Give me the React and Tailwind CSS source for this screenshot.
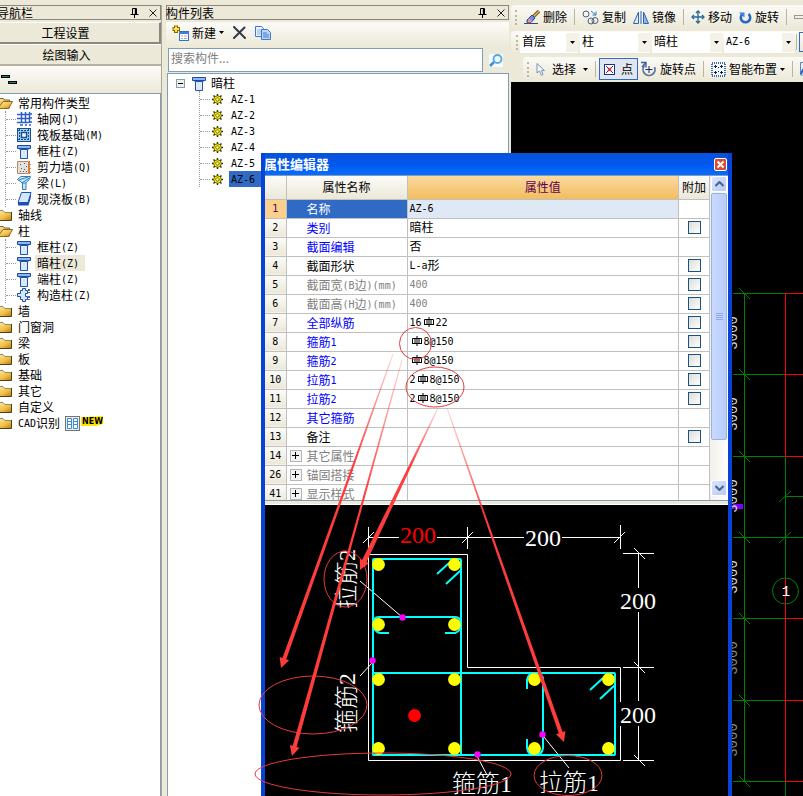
import React, { useState } from "react";

// Splits a label so that latin characters take half the width of a hanzi
const Txt = ({ children }) => (
  <>
    {children.split(/([\x20-\x7e]+)/).map((part, i) =>
      i % 2 ? (
        <span
          key={i}
          className="align-[1px] font-['DejaVu_Sans_Mono',monospace] text-[10px] leading-none whitespace-pre"
        >
          {part}
        </span>
      ) : (
        part
      )
    )}
  </>
);

/* ---------- icons ---------- */

const PinIcon = () => (
  <svg width="9" height="10" viewBox="0 0 9 10" fill="none" stroke="#000">
    <path d="M2.5 6V0.5H6.5V6M0.5 6.5H8.5M4.5 7V10" />
    <path d="M5.5 1V6" strokeWidth="1.4" />
  </svg>
);

const CloseIcon = () => (
  <svg width="8" height="8" viewBox="0 0 8 8" stroke="#222">
    <path d="M0.5 0.5L7.5 7.5M7.5 0.5L0.5 7.5" />
  </svg>
);

const Caret = () => (
  <svg width="5" height="3" viewBox="0 0 5 3" className="shrink-0">
    <path d="M0 0H5L2.5 3Z" fill="#000" />
  </svg>
);

const FolderIcon = ({ open }) => (
  <svg width="18" height="12" viewBox="0 0 18 12" className="-ml-[5px] shrink-0">
    <defs>
      <linearGradient id="folder" x1="0" y1="0" x2="1" y2="1">
        <stop offset="0" stopColor="#fff3b0" />
        <stop offset="0.6" stopColor="#f0bd45" />
        <stop offset="1" stopColor="#b97908" />
      </linearGradient>
    </defs>
    {open ? (
      <>
        <path d="M1 11V1.5H8L10 3H14.5V11Z" fill="url(#folder)" stroke="#7a6540" />
        <path d="M3 11.5L8 4.5H17.5L13.5 11.5Z" fill="url(#folder)" stroke="#8a6a20" />
      </>
    ) : (
      <>
        <path d="M1 11V1.5H8L10 3H16.5V11.5H1Z" fill="url(#folder)" />
        <path d="M1 1.5H8L10 3.5H16" fill="none" stroke="#9a8a60" />
        <path d="M16.5 3V11.5H1" fill="none" stroke="#4f4020" />
      </>
    )}
  </svg>
);

const ColumnIcon = () => (
  <svg width="14" height="15" viewBox="0 0 14 15" className="shrink-0">
    <path d="M0.5 1.5H13.5V4.5H0.5Z" fill="#8fb7ef" stroke="#1c4ba3" />
    <path d="M2 5H12L10 7H4Z" fill="#2a5fc0" />
    <path d="M3.5 5.5H10.5V14.5H3.5Z" fill="#dbe9fc" stroke="#2353ab" />
  </svg>
);

const GridIcon = () => (
  <svg width="15" height="14" viewBox="0 0 15 14" className="shrink-0" fill="none" stroke="#2d5fc4" strokeWidth="1.5">
    <path d="M4.5 0V11M8.5 0V11M12.5 0V11M0 2.5H12M0 6.5H12M0 10.5H12" />
    <path d="M3 13H6M8 13H10M12 13H14M13 2H15M13 6H15M13 10H15" />
  </svg>
);

const RaftIcon = () => (
  <svg width="14" height="14" viewBox="0 0 14 14" className="shrink-0" fill="none" stroke="#16508f">
    <rect x="0.5" y="0.5" width="13" height="13" fill="#a9cdf3" />
    <rect x="4.5" y="4.5" width="5" height="5" fill="#fff" strokeWidth="1.5" />
    <path d="M2.5 1V13M11.5 1V13M1 2.5H13M1 11.5H13" strokeDasharray="2 1" />
  </svg>
);

const WallIcon = () => (
  <svg width="15" height="14" viewBox="0 0 15 14" className="shrink-0">
    <path d="M0.5 1.5H11.5V13.5H0.5Z" fill="#e5e1df" stroke="#b98466" />
    <path d="M3 4.5h1M7 3.5h1M9 6.5h1M4 8.5h1M7 9.5h1M3 11.5h1M6 11.5h1M9 11.5h1" stroke="#555" />
    <path d="M12.5 1V14M11 4.5H14M11 8.5H14M11 12.5H14" stroke="#e9792c" />
  </svg>
);

const BeamIcon = () => (
  <svg width="14" height="14" viewBox="0 0 14 14" className="shrink-0" stroke="#2f7fbf">
    <path d="M0.5 3.5L4 0.5H13.5L12 4L9 6.5V13.5H5.5V7Z" fill="#c9e6fa" />
    <path d="M2 4L11 1M5 7L12 2M6 7H9" fill="none" />
  </svg>
);

const SlabIcon = () => (
  <svg width="15" height="14" viewBox="0 0 15 14" className="shrink-0">
    <path d="M4.5 0.5H14L11 10.5H1Z" fill="#d4e7fd" stroke="#1c50b5" />
    <path d="M1 10.5H11L14 1V5L11.5 13.5H1Z" fill="#1c50b5" />
  </svg>
);

const TieColumnIcon = () => (
  <svg width="14" height="14" viewBox="0 0 14 14" className="shrink-0">
    <path
      d="M3.5 2.5H5.5V0.5H8.5V2.5H10.5V5.5H8.5V8.5H10.5V11.5H8.5V13.5H5.5V11.5H3.5V8.5H0.5V5.5H3.5Z"
      fill="#d3e6fb"
      stroke="#1f4f9f"
    />
    <path d="M12 1V5M12 8V12" stroke="#3d6cb5" strokeWidth="2" strokeDasharray="2 1" />
  </svg>
);

const GearIcon = () => (
  <svg width="11" height="11" viewBox="0 0 11 11" className="shrink-0">
    <path d="M5.5 0V11M0 5.5H11M1.5 1.5L9.5 9.5M9.5 1.5L1.5 9.5" stroke="#2b2600" strokeWidth="1.4" />
    <circle cx="5.5" cy="5.5" r="3.8" fill="#f2e600" stroke="#4d4600" strokeWidth="0.7" />
    <circle cx="5.5" cy="5.5" r="1.7" fill="#fffb9c" stroke="#222" strokeDasharray="1.3 1" />
  </svg>
);

const NewItemIcon = () => (
  <svg width="17" height="16" viewBox="0 0 17 16">
    <path d="M4 0.5V8M0.5 4H8" stroke="#8a6a00" strokeWidth="4" />
    <path d="M4 1.5V7M1.5 4H7" stroke="#ffe14a" strokeWidth="2" />
    <rect x="7.5" y="6.5" width="9" height="9" fill="#fff" stroke="#3a6fb5" />
    <path d="M7 8H17" stroke="#3f7fd8" strokeWidth="2" />
    <path d="M9 11H11M12 11H15M9 13.5H11M12 13.5H15" stroke="#8fb0dc" />
  </svg>
);

const DeleteIcon = () => (
  <svg width="13" height="13" viewBox="0 0 13 13" stroke="#333a48" strokeWidth="2" strokeLinecap="round">
    <path d="M1 1L12 12M11.5 1.5L1 12" />
  </svg>
);

const CopyDocIcon = () => (
  <svg width="16" height="14" viewBox="0 0 16 14" fill="#e9f3ff" stroke="#3f77cc">
    <path d="M0.5 0.5H6.5L8.5 2.5V10.5H0.5Z" />
    <path d="M2 4H6M2 6H6M2 8H6" stroke="#8db3e8" />
    <path d="M6.5 3.5H12.5L15.5 6.5V13.5H6.5Z" fill="#bcd7f8" />
    <path d="M8 7H12M8 9H14M8 11H14" />
  </svg>
);

const SearchIcon = () => (
  <svg width="14" height="13" viewBox="0 0 14 13" fill="none">
    <rect width="14" height="13" fill="#f4fbff" />
    <path d="M5 8L1 12" stroke="#3f8fd0" strokeWidth="2.5" />
    <circle cx="8.5" cy="5" r="4" fill="#eef9ff" stroke="#55a8e2" strokeWidth="1.8" />
  </svg>
);

const EraseIcon = () => (
  <svg width="16" height="15" viewBox="0 0 16 15">
    <path d="M15 1L8 8" stroke="#7a5a28" strokeWidth="3.5" />
    <path d="M15 1L9 7" stroke="#e3b25a" strokeWidth="1.5" />
    <path d="M8 5L11 8L7 12.5H3L3 10Z" fill="#6d8fe0" stroke="#2d4483" />
    <path d="M5 8L8 11L6.5 12.5H3.5Z" fill="#f48fa8" />
    <path d="M0 13.5H14" stroke="#2c4a86" />
  </svg>
);

const CopyIcon = () => (
  <svg width="17" height="15" viewBox="0 0 17 15" fill="none" stroke="#4a5f80">
    <circle cx="4" cy="4" r="3" />
    <circle cx="9" cy="11" r="3" />
    <circle cx="13" cy="10.5" r="3" />
    <path d="M9 1L14 5M14 1.5V5H10.5" stroke="#2d7ac0" />
  </svg>
);

const MirrorIcon = () => (
  <svg width="16" height="13" viewBox="0 0 16 13" fill="none" stroke="#2f65b4">
    <path d="M5.5 1V12.5H0.5Z" fill="#dceafb" />
    <path d="M10.5 1V12.5H15.5Z" fill="#8fb6ea" />
    <path d="M8 0V13" />
  </svg>
);

const MoveIcon = () => (
  <svg width="14" height="14" viewBox="0 0 14 14" fill="none" stroke="#25679c" strokeWidth="1.3">
    <path d="M7 1V13M1 7H13" />
    <path d="M5 3L7 1L9 3M5 11L7 13L9 11M3 5L1 7L3 9M11 5L13 7L11 9" />
  </svg>
);

const RotateIcon = () => (
  <svg width="13" height="13" viewBox="0 0 13 13" fill="none">
    <path d="M3.5 3A4.7 4.7 0 1 0 9.5 3" stroke="#2a68c8" strokeWidth="2.6" />
    <path d="M0 1.5H5.5V6.5Z" fill="#3f83e0" />
  </svg>
);

const CursorIcon = () => (
  <svg width="9" height="13" viewBox="0 0 9 13">
    <path d="M1 0.5V10L3.5 8L5.5 12.5L7 11.5L5.5 7.5H8.5Z" fill="#f3f7fd" stroke="#7c94b8" />
  </svg>
);

const PointIcon = () => (
  <svg width="11" height="11" viewBox="0 0 11 11">
    <rect x="0.5" y="0.5" width="10" height="10" fill="#fff" stroke="#1d2f8f" />
    <path d="M2 2L9 9M9 2L2 9" stroke="#2338a0" />
    <path d="M4 4L7 7M7 4L4 7" stroke="#e0202c" strokeWidth="1.6" />
  </svg>
);

const RotatePointIcon = () => (
  <svg width="16" height="16" viewBox="0 0 16 16" fill="none">
    <path d="M3.5 4.5A6 6 0 1 0 13.5 6" stroke="#5a76a8" strokeWidth="1.8" />
    <path d="M8 5V12M4.5 8.5H11.5" stroke="#14295c" />
    <path d="M0 1.5H5V6.5M4.5 2L1 6" stroke="#3863ad" strokeWidth="1.4" />
  </svg>
);

const SmartIcon = () => (
  <svg width="15" height="15" viewBox="0 0 15 15" fill="none" stroke="#0f2244">
    <rect x="1" y="1" width="13" height="13" fill="#f3f8ff" stroke="#3e6ea8" strokeWidth="2" strokeDasharray="1 1" />
    <path d="M4.5 3V6M3 4.5H6M10.5 3V6M9 4.5H12M4.5 9V12M3 10.5H6M10.5 9V12M9 10.5H12M7.5 5V6M7.5 9V10" />
  </svg>
);

const LayersIcon = () => (
  <svg width="16" height="10" viewBox="0 0 16 10">
    <path d="M0 1.5H9M7 7.5H16" stroke="#000" strokeWidth="3" />
    <path d="M1 1.5H8M8 7.5H15" stroke="#1b8076" />
  </svg>
);

const NewBadge = () => (
  <svg width="22" height="10" viewBox="0 0 22 10" fill="none">
    <path d="M0 1L22 0V8L15 10H0Z" fill="#ffe600" />
    <text x="1" y="8" className="fill-black font-['DejaVu_Sans',sans-serif] text-[8px] font-bold">
      NEW
    </text>
  </svg>
);

const Rebar = () => (
  <svg width="12" height="12" viewBox="0 0 12 12" fill="none" stroke="#000" className="shrink-0">
    <path d="M1 8.5H11M1.5 3.5H10.5V8M1.5 3.5V8M6 1V11M4 3.5V8M8 3.5V8" />
  </svg>
);

/* ---------- shared bits ---------- */

const PanelHeader = ({ title }) => (
  <div className="flex h-[15px] items-center gap-[10px] border border-[#8a887c] pr-[3px]">
    <h2 className="-ml-px flex-1 whitespace-nowrap">{title}</h2>
    <button aria-label="固定"><PinIcon /></button>
    <button aria-label="关闭"><CloseIcon /></button>
  </div>
);

const Grip = () => (
  <span className="h-[15px] w-[2px] shrink-0 border-l-2 border-dotted border-[#b9b6a4]" />
);

const Sep = () => <span className="h-4 w-px shrink-0 bg-[#b8b5a5]" />;

/* ---------- left navigation ---------- */

const navTree = [
  {
    name: "常用构件类型",
    children: [
      { name: "轴网(J)", icon: GridIcon },
      { name: "筏板基础(M)", icon: RaftIcon },
      { name: "框柱(Z)", icon: ColumnIcon },
      { name: "剪力墙(Q)", icon: WallIcon },
      { name: "梁(L)", icon: BeamIcon },
      { name: "现浇板(B)", icon: SlabIcon },
    ],
  },
  { name: "轴线" },
  {
    name: "柱",
    children: [
      { name: "框柱(Z)", icon: ColumnIcon },
      { name: "暗柱(Z)", icon: ColumnIcon, active: true },
      { name: "端柱(Z)", icon: ColumnIcon },
      { name: "构造柱(Z)", icon: TieColumnIcon },
    ],
  },
  { name: "墙" },
  { name: "门窗洞" },
  { name: "梁" },
  { name: "板" },
  { name: "基础" },
  { name: "其它" },
  { name: "自定义" },
  { name: "CAD识别", isNew: true },
];

const NavPanel = () => (
  <aside className="flex w-[162px] shrink-0 flex-col border-r border-[#a9a796]">
    <div className="overflow-hidden">
      <div className="-ml-[3px]">
        <PanelHeader title="导航栏" />
      </div>
    </div>
    <button className="mt-[2px] h-[22px] border-t border-r-2 border-b-2 border-[#8b897d] border-t-white pr-7">
      工程设置
    </button>
    <button className="h-[22px] border-t border-b-2 border-[#b4b1a1] border-t-white pr-7">
      绘图输入
    </button>
    <div className="flex h-[27px] items-center bg-linear-to-b from-[#fcfbf8] to-[#ece9d8] pl-px">
      <LayersIcon />
    </div>
    <ul className="flex-1 overflow-hidden border-t border-r border-[#7f9db9] bg-white pt-px">
      {navTree.map((node) => (
        <li key={node.name}>
          <div className="flex h-4 items-center gap-[5px]">
            <FolderIcon open={!!node.children} />
            <span className="whitespace-nowrap"><Txt>{node.name}</Txt></span>
            {node.isNew && (
              <span className="flex gap-px">
                <svg width="15" height="15" viewBox="0 0 15 15">
                  <rect x="0.5" y="0.5" width="14" height="14" fill="#e8edf3" stroke="#78746c" />
                  <path d="M2.5 2.5H6.5V12.5H2.5ZM8.5 2.5H12.5V12.5H8.5Z" fill="#fff" stroke="#3c8ad8" />
                  <path d="M3 5.5H6M3 8.5H6M9 5.5H12M9 8.5H12" stroke="#3c8ad8" />
                </svg>
                <NewBadge />
              </span>
            )}
          </div>
          {node.children && (
            <ul className="ml-[5px] border-l border-dotted border-[#999]">
              {node.children.map((item) => (
                <li key={item.name} className="flex h-4 items-center">
                  <span className="w-[10px] border-t border-dotted border-[#999]" />
                  <span className="flex w-4 justify-center"><item.icon /></span>
                  <span
                    className={`ml-[3px] h-4 px-[2px] whitespace-nowrap ${
                      item.active ? "bg-[#ece9d8] pr-[6px]" : ""
                    }`}
                  >
                    <Txt>{item.name}</Txt>
                  </span>
                </li>
              ))}
            </ul>
          )}
        </li>
      ))}
    </ul>
  </aside>
);

/* ---------- component list ---------- */

const members = ["AZ-1", "AZ-2", "AZ-3", "AZ-4", "AZ-5", "AZ-6"];

const MemberPanel = () => {
  const [keyword, setKeyword] = useState("");

  return (
    <section className="ml-1 flex w-[343px] shrink-0 flex-col">
      <PanelHeader title="构件列表" />
      <div className="mt-[2px] flex h-[25px] items-center bg-linear-to-b from-[#fcfbf8] to-[#ece9d8] pb-1 pl-[6px]">
        <button className="flex items-center gap-[3px]">
          <NewItemIcon />
          新建
          <Caret />
        </button>
        <button aria-label="删除" className="ml-[9px]"><DeleteIcon /></button>
        <button aria-label="复制" className="ml-[9px]"><CopyDocIcon /></button>
      </div>
      <div className="mt-px ml-[2px] flex h-[24px]">
        <input
          className="min-w-0 flex-1 border border-[#7f9db9] bg-white px-[2px] pb-1 placeholder:text-[#808080]"
          aria-label="搜索构件"
          placeholder="搜索构件..."
          value={keyword}
          onChange={(e) => setKeyword(e.target.value)}
        />
        <button aria-label="搜索" className="flex w-[26px] items-center justify-center">
          <SearchIcon />
        </button>
      </div>
      <div className="mt-px ml-px flex-1 overflow-hidden border border-b-0 border-[#7f9db9] bg-white pt-px pl-2">
        <div className="flex h-4 items-center">
          <svg width="9" height="9" viewBox="0 0 9 9">
            <rect x="0.5" y="0.5" width="8" height="8" fill="#f1efe6" stroke="#7f9db9" />
            <path d="M2 4.5H7" stroke="#000" />
          </svg>
          <span className="mr-[5px] ml-[7px]"><ColumnIcon /></span>
          暗柱
        </div>
        <ul className="ml-[23px] border-l border-dotted border-[#999]">
          {members.map((name) => (
            <li key={name} className="flex h-4 items-center">
              <span className="mr-[2px] w-[10px] border-t border-dotted border-[#999]" />
              <GearIcon />
              <span
                className={`ml-[6px] h-4 px-[2px] ${
                  name === "AZ-6" ? "w-10 bg-[#316ac5]" : ""
                }`}
              >
                <Txt>{name}</Txt>
              </span>
            </li>
          ))}
        </ul>
      </div>
    </section>
  );
};

/* ---------- toolbars ---------- */

const Tool = ({ icon, children }) => (
  <button className="flex shrink-0 items-center gap-[3px] whitespace-nowrap">
    {icon}
    {children}
  </button>
);

const Combo = ({ label, value, width }) => (
  <span className={`relative h-[21px] shrink-0 bg-white ${width}`}>
    <select
      aria-label={label}
      className={`h-full w-full appearance-none px-[2px] pb-[2px] ${
        value === "AZ-6" ? "font-['DejaVu_Sans_Mono',monospace] text-[10px]" : ""
      }`}
    >
      <option>{value}</option>
    </select>
    <span className="pointer-events-none absolute inset-y-px right-0 flex w-3 items-center justify-center bg-[#f4f2e8]">
      <Caret />
    </span>
  </span>
);

const Toolbars = () => (
  <div className="h-[77px] overflow-hidden">
    <div className="flex h-[24px] items-center gap-[7px] rounded-l-sm bg-linear-to-b from-[#fbfaf6] to-[#ece9d8] pl-1">
      <Grip />
      <Tool icon={<EraseIcon />}>删除</Tool>
      <Sep />
      <Tool icon={<CopyIcon />}>复制</Tool>
      <Tool icon={<MirrorIcon />}>镜像</Tool>
      <Sep />
      <Tool icon={<MoveIcon />}>移动</Tool>
      <Tool icon={<RotateIcon />}>旋转</Tool>
      <Sep />
      <span className="h-1 w-3 shrink-0 border border-[#9a988c]" />
    </div>
    <div className="mt-[2px] flex h-[22px] items-center gap-[2px] rounded-l-sm bg-linear-to-b from-[#fbfaf6] to-[#ece9d8] pl-[5px]">
      <Grip />
      <Combo label="楼层" value="首层" width="w-[58px]" />
      <Combo label="构件类别" value="柱" width="w-[70px]" />
      <Combo label="构件类型" value="暗柱" width="w-[70px]" />
      <Combo label="构件名称" value="AZ-6" width="w-[70px]" />
      <Sep />
      <span className="h-5 w-3 shrink-0 border border-[#316ac5]" />
    </div>
    <div className="mt-1 ml-3 flex h-[24px] items-center gap-[7px] rounded-l-sm bg-linear-to-b from-[#fbfaf6] to-[#ece9d8] pl-1">
      <Grip />
      <Tool icon={<CursorIcon />}>
        <span className="mr-1 ml-1">选择</span>
        <Caret />
      </Tool>
      <Sep />
      <button className="-mx-1 flex h-[22px] w-[39px] shrink-0 items-center justify-center gap-[6px] border border-[#316ac5] bg-[#e1e6ee]">
        <PointIcon />
        点
      </button>
      <Tool icon={<RotatePointIcon />}>旋转点</Tool>
      <Sep />
      <Tool icon={<SmartIcon />}>
        智能布置
        <Caret />
      </Tool>
      <Sep />
      <svg width="12" height="14" viewBox="0 0 12 14" className="shrink-0">
        <path d="M0.5 13V0.5H11V13Z" fill="#eaf2fc" stroke="#5a86c8" />
        <path d="M1 12Q4 4 9 5" fill="none" stroke="#2f65b4" strokeWidth="2" />
      </svg>
    </div>
  </div>
);

/* ---------- axis grid behind the dialog ---------- */

const axisRows = [293, 374, 456, 537, 618, 700, 781];
const redRows = [293, 374, 456, 618, 700, 781];
const spans = [333, 414, 496, 577, 658, 740];

const AxisCanvas = () => (
  <div className="flex-1 overflow-hidden bg-black">
    <svg width="292" height="714" viewBox="511 82 292 714" fill="none" stroke="#008000">
      {axisRows.map((y) => (
        <path key={y} d={`M733 ${y}.5H785M739 ${y - 5}L750 ${y + 6}`} />
      ))}
      <path d="M744.5 293V781M785.5 456V578M785.5 781V796M785 496.5H803M785 537.5H803M779 502L791 491M779 543L791 532" />
      {redRows.map((y) => (
        <path key={y} d={`M785 ${y}.5H803`} stroke="#f00" />
      ))}
      <path d="M785.5 293V456M785.5 578V781" stroke="#f00" />
      <circle cx="785.5" cy="591" r="13" />
      <text x="786" y="596" textAnchor="middle" stroke="none" className="fill-white font-['Liberation_Mono',monospace] text-[14px]">
        1
      </text>
      <path d="M733 506.5H743" stroke="#7a00ff" strokeWidth="5" />
      {spans.map((y, i) => (
        <text
          key={y}
          transform={`translate(737 ${y}) rotate(-90)`}
          textAnchor="middle"
          stroke="none"
          fill={i > 3 ? "#8a8a8a" : "#dcdcdc"}
          className="font-['Liberation_Mono',monospace] text-[14px]"
        >
          3000
        </text>
      ))}
    </svg>
  </div>
);

/* ---------- property dialog ---------- */

const properties = [
  { no: 1, name: "名称", value: "AZ-6", selected: true },
  { no: 2, name: "类别", value: "暗柱", tone: "blue", check: true },
  { no: 3, name: "截面编辑", value: "否", tone: "blue" },
  { no: 4, name: "截面形状", value: "L-a形", check: true },
  { no: 5, name: "截面宽(B边)(mm)", value: "400", tone: "gray", check: true },
  { no: 6, name: "截面高(H边)(mm)", value: "400", tone: "gray", check: true },
  { no: 7, name: "全部纵筋", count: "16", bar: "22", tone: "blue", check: true },
  { no: 8, name: "箍筋1", count: "", bar: "8@150", tone: "blue", check: true },
  { no: 9, name: "箍筋2", count: "", bar: "8@150", tone: "blue", check: true },
  { no: 10, name: "拉筋1", count: "2", bar: "8@150", tone: "blue", check: true },
  { no: 11, name: "拉筋2", count: "2", bar: "8@150", tone: "blue", check: true },
  { no: 12, name: "其它箍筋", tone: "blue" },
  { no: 13, name: "备注", check: true },
  { no: 14, name: "其它属性", tone: "gray", group: true },
  { no: 26, name: "锚固搭接", tone: "gray", group: true },
  { no: 41, name: "显示样式", tone: "gray", group: true },
];

const tones = {
  blue: "text-[#0000ff]",
  gray: "text-[#808080]",
};

const PropertyTable = () => (
  <table className="w-full table-fixed border-collapse">
    <colgroup>
      <col className="w-[21px]" />
      <col className="w-[121px]" />
      <col />
      <col className="w-[31px]" />
    </colgroup>
    <thead>
      <tr className="h-[23px] bg-linear-to-b from-[#fcfbf8] to-[#ebe8d8]">
        <th className="border-r border-b border-[#c0c0c0]" />
        <th className="border-r border-b border-[#c0c0c0] p-0 font-normal">属性名称</th>
        <th className="border-r border-b border-[#c0c0c0] bg-linear-to-b from-[#fad9a0] to-[#f2bd5c] p-0 font-normal text-[#5c0050]">
          属性值
        </th>
        <th className="border-r border-b border-[#c0c0c0] p-0 font-normal whitespace-nowrap">附加</th>
      </tr>
    </thead>
    <tbody>
      {properties.map((row) => (
        <tr key={row.no} className="h-[19px]">
          <td
            className={`border-r border-b border-[#c0c0c0] p-0 text-center ${
              row.selected
                ? "bg-[#fbcf8c] text-[#5c0050]"
                : "bg-linear-to-b from-[#fcfbf8] to-[#ebe8d8]"
            }`}
          >
            <div className="h-[18px]"><Txt>{String(row.no)}</Txt></div>
          </td>
          <td
            className={`border-r border-b border-[#c0c0c0] p-0 whitespace-nowrap ${
              row.selected ? "bg-[#316ac5] text-white" : tones[row.tone] || ""
            }`}
          >
            <div className="flex h-[18px] items-center">
              <span className="w-5 shrink-0 pl-[3px]">
                {row.group && (
                  <button
                    aria-label={`展开${row.name}`}
                    className="flex h-3 w-3 items-center justify-center border border-[#b5b5b5] bg-[#f4f4f4]"
                  >
                    <svg width="7" height="7" viewBox="0 0 7 7" stroke="#000">
                      <path d="M3.5 0V7M0 3.5H7" />
                    </svg>
                  </button>
                )}
              </span>
              <span><Txt>{row.name}</Txt></span>
            </div>
          </td>
          <td
            className={`border-r border-b border-[#c0c0c0] py-0 pr-0 pl-[2px] ${
              row.selected ? "bg-[#dfe9f5]" : ""
            } ${row.tone === "gray" ? "text-[#808080]" : ""}`}
          >
            {row.bar ? (
              <div className="flex h-[18px] items-center gap-px pb-px">
                <span><Txt>{row.count}</Txt></span>
                <Rebar />
                <span><Txt>{row.bar}</Txt></span>
              </div>
            ) : (
              <div className="h-[18px]"><Txt>{row.value || ""}</Txt></div>
            )}
          </td>
          <td className="border-r border-b border-[#c0c0c0] p-0">
            {row.check && (
              <input
                type="checkbox"
                aria-label={`附加 ${row.name}`}
                className="mx-auto block h-[13px] w-[13px] appearance-none border border-[#1c5180] bg-linear-to-br from-[#dcdcd7] to-white"
              />
            )}
          </td>
        </tr>
      ))}
    </tbody>
  </table>
);

const ScrollBar = () => (
  <div className="flex w-[18px] shrink-0 flex-col bg-linear-to-r from-[#f3f1ec] to-[#fefefb] px-px pb-1">
    <button aria-label="向上" className="flex h-4 items-center justify-center rounded-xs border border-white bg-linear-to-br from-[#dbe5ff] to-[#b5c8f8]">
      <svg width="9" height="6" viewBox="0 0 9 6" fill="none" stroke="#4d6185" strokeWidth="2">
        <path d="M0.5 5L4.5 1L8.5 5" />
      </svg>
    </button>
    <div className="mt-px flex h-[247px] items-center justify-center rounded-xs border border-[#98b4e6] bg-linear-to-r from-[#c9d9ff] to-[#b9ccfb]">
      <svg width="7" height="8" viewBox="0 0 7 8" stroke="#8cabee">
        <path d="M0 0.5H7M0 2.5H7M0 4.5H7M0 6.5H7" />
      </svg>
    </div>
    <span className="flex-1" />
    <button aria-label="向下" className="flex h-4 items-center justify-center rounded-xs border border-white bg-linear-to-br from-[#dbe5ff] to-[#b5c8f8]">
      <svg width="9" height="6" viewBox="0 0 9 6" fill="none" stroke="#4d6185" strokeWidth="2">
        <path d="M0.5 1L4.5 5L8.5 1" />
      </svg>
    </button>
  </div>
);

const bars = [
  [378, 564], [454, 564], [378, 624], [454, 624],
  [378, 679], [454, 679], [378, 748], [454, 748],
  [534, 679], [608, 679], [534, 748], [608, 748],
];
const marks = [[402, 617], [372, 660], [477, 754], [542, 734]];

const cadText =
  "fill-white font-['Liberation_Serif','Noto_Sans_CJK_SC',serif] text-[24px] font-light";

const SectionDrawing = () => (
  <svg width="463" height="291" viewBox="265 505 463 291" fill="none">
    {/* concrete outline */}
    <path d="M368.5 554.5H467.5V667.5H620.5V760.5H368.5Z" stroke="#fff" />

    {/* dimension lines */}
    <g stroke="#fff">
      <path d="M369 537.5H399M437 537.5H524M562 537.5H620" />
      <path d="M368.5 527V549M467.5 527V549M620.5 525V549" />
      <path d="M363 543L374 532M462 543L473 532M614 543L625 532" />
      <path d="M623 553.5H654M623 667.5H654M623 760.5H654" />
      <path d="M638.5 553V588M638.5 612V701M638.5 726V760" />
      <path d="M634 548L645 559M634 662L645 673M634 755L645 766" />
      <path d="M360 581L402 617M360 676L372 663M477 756L487 775M544 737L569 768" />
    </g>
    <rect x="619" y="702" width="38" height="24" fill="#000" />

    {/* stirrups and ties */}
    <g stroke="#0ff" strokeWidth="2">
      <rect x="373" y="559" width="88" height="196" rx="1" />
      <rect x="373" y="673" width="242" height="82" rx="1" />
      <path d="M389 633H380Q373 631 373 624Q373 617 379 617H455Q461 617 461 624Q461 631 455 633H445" />
      <path d="M527 689V680Q528 673 535 673Q543 673 543 680V748Q542 755 535 755Q528 755 527 748V739" />
      <path d="M437 574L449 563M446 584L461 570M590 690L603 678M600 699L615 685" />
    </g>

    {bars.map(([x, y]) => (
      <circle key={`${x}-${y}`} cx={x + 0.5} cy={y + 0.5} r="6.4" fill="#ff0" />
    ))}
    <circle cx="414.5" cy="715.5" r="6.4" fill="#f00" />
    {marks.map(([x, y]) => (
      <circle key={`${x}-${y}`} cx={x + 0.5} cy={y + 0.5} r="3.2" fill="#f0f" />
    ))}

    <g textAnchor="middle" className={cadText}>
      <text x="418" y="543" className="fill-[#f00]">200</text>
      <text x="543" y="546">200</text>
      <text x="638" y="609">200</text>
      <text x="638" y="723">200</text>
      <text x="482" y="792">箍筋1</text>
      <text x="569" y="791">拉筋1</text>
      <text transform="translate(355 579) rotate(-90)">拉筋2</text>
      <text transform="translate(355 703) rotate(-90)">箍筋2</text>
    </g>
  </svg>
);

const PropertyDialog = () => (
  <div
    role="dialog"
    aria-label="属性编辑器"
    className="absolute top-[153px] bottom-0 left-[261px] flex w-[471px] flex-col overflow-hidden border-r-4 border-l-4 border-[#0842d8] bg-[#ece9d8]"
  >
    <header className="-mx-1 flex h-[22px] shrink-0 items-center justify-between bg-linear-to-b from-[#0a52d8] via-[#0058ee] to-[#0a6cff] pr-[5px] pl-[3px] text-[13px] font-bold text-white">
      属性编辑器
      <button
        aria-label="关闭"
        className="flex h-[13px] w-[13px] items-center justify-center rounded-xs border border-white bg-[#dd4f2c]"
      >
        <svg width="7" height="7" viewBox="0 0 7 7" stroke="#fff" strokeWidth="2">
          <path d="M0.5 0.5L6.5 6.5M6.5 0.5L0.5 6.5" />
        </svg>
      </button>
    </header>
    <div className="flex h-[326px] shrink-0 overflow-hidden border-t border-b border-[#7f9db9] bg-white">
      <div className="min-w-0 flex-1">
        <PropertyTable />
      </div>
      <ScrollBar />
    </div>
    <div className="mt-[3px] flex-1 overflow-hidden border-t border-white bg-black">
      <SectionDrawing />
    </div>
  </div>
);

/* ---------- hand-drawn review marks ---------- */

const arrows = [
  { from: [393, 354], to: [281, 668], width: 4 },
  { from: [402, 360], to: [292, 756], width: 4 },
  { from: [438, 408], to: [360, 570], width: 5 },
  { from: [447, 408], to: [564, 742], width: 4 },
];

const Arrow = ({ from, to, width, id }) => {
  const len = Math.hypot(to[0] - from[0], to[1] - from[1]);
  const angle = (Math.atan2(to[1] - from[1], to[0] - from[0]) * 180) / Math.PI;
  const neck = len - 10;
  return (
    <g transform={`translate(${from[0]} ${from[1]}) rotate(${angle})`}>
      <linearGradient id={id} gradientUnits="userSpaceOnUse" x1="0" y1="0" x2={len} y2="0">
        <stop offset="0" stopColor="#ff3c3c" stopOpacity="0.2" />
        <stop offset="0.35" stopColor="#ff3c3c" />
      </linearGradient>
      <path
        d={`M0 -0.5L${neck} ${-width / 2}V-5L${len} 0L${neck} 5V${width / 2}L0 0.5Z`}
        fill={`url(#${id})`}
      />
    </g>
  );
};

const Annotations = () => (
  <svg
    width="803"
    height="796"
    viewBox="0 0 803 796"
    fill="none"
    className="pointer-events-none absolute top-0 left-0"
  >
    <g stroke="#e83a3a">
      <circle cx="415.5" cy="343.5" r="16" />
      <ellipse cx="435" cy="387" rx="29" ry="20" />
      <ellipse cx="345.5" cy="579" rx="21.5" ry="28" />
      <ellipse cx="313" cy="705" rx="54" ry="29" />
      <ellipse cx="383" cy="774" rx="128" ry="21" />
      <ellipse cx="568" cy="775.5" rx="34" ry="20" />
    </g>
    {arrows.map((arrow, i) => (
      <Arrow key={i} id={`arrow-${i}`} {...arrow} />
    ))}
  </svg>
);

const App = () => (
  <div className="relative flex h-screen overflow-hidden bg-[#ece9d8] pt-[5px] font-['Noto_Sans_CJK_SC',sans-serif] text-xs leading-4 text-black">
    <NavPanel />
    <MemberPanel />
    <main className="ml-[2px] flex min-w-0 flex-1 flex-col">
      <Toolbars />
      <AxisCanvas />
    </main>
    <PropertyDialog />
    <Annotations />
  </div>
);

export default App;
